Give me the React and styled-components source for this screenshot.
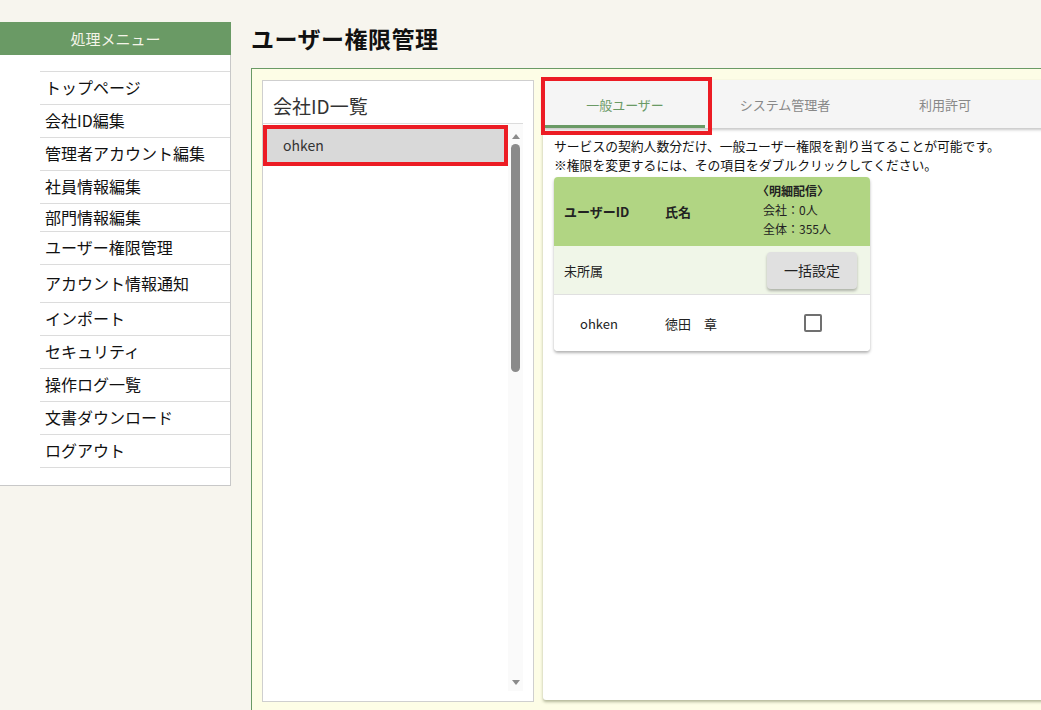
import React from "react";
import styled, { createGlobalStyle } from "styled-components";

const GlobalStyle = createGlobalStyle`
  html, body {
    margin: 0;
    padding: 0;
    overflow: hidden;
    background: #f7f5ee;
  }
  body {
    font-family: "Noto Sans CJK JP", "Noto Sans", sans-serif;
    color: #111;
  }
`;

const Page = styled.div`
  display: flex;
  align-items: flex-start;
  width: 1300px;
  height: 710px;
  overflow: hidden;
`;

const Sidebar = styled.nav`
  width: 230px;
  margin-top: 22px;
  background: #fff;
  border-right: 1px solid #c8c8c8;
  border-bottom: 1px solid #c8c8c8;
  padding-bottom: 17px;
  flex-shrink: 0;
`;

const SidebarHeader = styled.div`
  height: 33px;
  background: #6a9a65;
  color: #f4f4e8;
  font-size: 15px;
  display: flex;
  align-items: center;
  justify-content: center;
  margin-right: -1px;
`;

const MenuList = styled.ul`
  list-style: none;
  margin: 16px 0 0 40px;
  padding: 0;
  border-bottom: 1px solid #dcdcdc;
`;

const MenuItem = styled.li`
  height: ${({ h }) => h}px;
  box-sizing: border-box;
  border-top: 1px solid #dcdcdc;
  display: flex;
  align-items: center;
  padding: 0 0 2px 5px;
  font-size: 16px;
  color: #111;
  white-space: nowrap;
`;

const Main = styled.main`
  flex: 1;
  margin-left: 20px;
  display: flex;
  flex-direction: column;
`;

const Title = styled.h1`
  margin: 0;
  height: 68px;
  padding: 22px 0 14px;
  box-sizing: border-box;
  display: flex;
  align-items: center;
  font-size: 23px;
  font-weight: 700;
  color: #111;
  letter-spacing: 0.5px;
`;

const Panel = styled.section`
  border: 1px solid #6a9a65;
  background: #fdfde6;
  padding: 11px 10px 40px 10px;
  display: flex;
  gap: 9px;
  height: 700px;
  box-sizing: border-box;
`;

const ListBox = styled.div`
  width: 270px;
  height: 620px;
  background: #fff;
  border: 1px solid #cfcfcf;
  display: flex;
  flex-direction: column;
  flex-shrink: 0;
`;

const ListTitle = styled.div`
  height: 43px;
  box-sizing: border-box;
  margin-right: 10px;
  border-bottom: 1px solid #dcdcdc;
  display: flex;
  align-items: flex-end;
  padding: 0 0 4px 10px;
  font-size: 19px;
  color: #333;
`;

const ListBody = styled.div`
  flex: 1;
  display: flex;
  margin-right: 10px;
  margin-bottom: 10px;
`;

const ListItems = styled.div`
  flex: 1;
  padding-top: 3px;
`;

const Company = styled.div`
  position: relative;
  height: 36px;
  background: ${({ selected }) => (selected ? "#d9d9d9" : "transparent")};
  display: flex;
  align-items: center;
  padding-left: 20px;
  font-size: 14px;
  color: #333;

  &::after {
    content: "";
    display: ${({ marked }) => (marked ? "block" : "none")};
    position: absolute;
    left: 0;
    right: 0;
    top: -2px;
    bottom: -3px;
    border: 4px solid #ec1c24;
  }
`;

const ScrollTrack = styled.div`
  width: 15px;
  background: #fafafa;
  display: flex;
  flex-direction: column;
  align-items: center;
  padding: 10px 0 6px;
`;

const Arrow = styled.div`
  width: 0;
  height: 0;
  border-left: 4px solid transparent;
  border-right: 4px solid transparent;
  ${({ down }) =>
    down
      ? "border-top: 5px solid #8a8a8a;"
      : "border-bottom: 5px solid #8a8a8a;"}
`;

const Thumb = styled.div`
  width: 9px;
  height: 228px;
  margin-top: 5px;
  border-radius: 5px;
  background: #8a8a8a;
`;

const Spacer = styled.div`
  flex: 1;
`;

const Card = styled.div`
  flex: 1;
  height: 620px;
  background: #fff;
  border-radius: 3px;
  box-shadow: 0 2px 3px rgba(90, 100, 60, 0.45);
  display: flex;
  flex-direction: column;
`;

const TabBar = styled.div`
  height: 48px;
  background: #f5f5f5;
  display: flex;
  padding-left: 2px;
  box-shadow: 0 2px 3px rgba(0, 0, 0, 0.22);
  border-radius: 3px 3px 0 0;
`;

const Tab = styled.div`
  position: relative;
  width: 160px;
  display: flex;
  align-items: center;
  justify-content: center;
  font-size: 13px;
  color: ${({ active }) => (active ? "#6a9a65" : "#888")};
  box-shadow: ${({ active }) => (active ? "inset 0 -3px 0 #6a9a65" : "none")};

  &::after {
    content: "";
    display: ${({ marked }) => (marked ? "block" : "none")};
    position: absolute;
    left: -4px;
    right: -7px;
    top: -3px;
    bottom: -7px;
    border: 4px solid #ec1c24;
  }
`;

const CardBody = styled.div`
  padding: 8px 11px;
`;

const Note = styled.p`
  margin: 0;
  font-size: 12.8px;
  line-height: 19px;
  color: #111;
  white-space: nowrap;
`;

const Table = styled.div`
  margin-top: 3px;
  width: 316px;
  border-radius: 4px;
  overflow: hidden;
  box-shadow: 0 2px 3px rgba(0, 0, 0, 0.3);
  background: #fff;
`;

const Row = styled.div`
  display: grid;
  grid-template-columns: 101px 100px 115px;
  align-items: center;
  height: ${({ h }) => h}px;
  background: ${({ bg }) => bg || "#fff"};
  border-bottom: ${({ line }) => (line ? "1px solid #e0e0e0" : "none")};
`;

const HeadCell = styled.div`
  font-size: 13px;
  font-weight: 700;
  color: #222;
  padding-left: ${({ pad }) => pad ?? 10}px;
`;

const HeadStack = styled.div`
  display: flex;
  flex-direction: column;
  font-size: 12px;
  line-height: 19px;
  color: #222;
  padding: 0 0 4px 8px;
`;

const Bold = styled.span`
  font-weight: 700;
  margin-left: -6px;
`;

const Cell = styled.div`
  font-size: 13px;
  color: #222;
  padding-left: ${({ pad }) => pad ?? 10}px;
  display: flex;
  justify-content: ${({ center }) => (center ? "center" : "flex-start")};
`;

const Button = styled.button`
  grid-column: 3;
  justify-self: start;
  margin-left: 12px;
  width: 90px;
  height: 37px;
  border: none;
  border-radius: 4px;
  background: #e0e0e0;
  box-shadow: 0 2px 3px rgba(0, 0, 0, 0.28);
  font-family: inherit;
  font-size: 14px;
  color: #222;
`;

const Check = styled.div`
  width: 14px;
  height: 14px;
  border: 2px solid #707070;
  border-radius: 2px;
`;

const menu = [
  ["トップページ", 33],
  ["会社ID編集", 33],
  ["管理者アカウント編集", 33],
  ["社員情報編集", 33],
  ["部門情報編集", 28],
  ["ユーザー権限管理", 33],
  ["アカウント情報通知", 38],
  ["インポート", 33],
  ["セキュリティ", 33],
  ["操作ログ一覧", 33],
  ["文書ダウンロード", 33],
  ["ログアウト", 33],
];

export default function App() {
  return (
    <>
      <GlobalStyle />
      <Page>
        <Sidebar>
          <SidebarHeader>処理メニュー</SidebarHeader>
          <MenuList>
            {menu.map(([label, h]) => (
              <MenuItem key={label} h={h}>
                {label}
              </MenuItem>
            ))}
          </MenuList>
        </Sidebar>
        <Main>
          <Title>ユーザー権限管理</Title>
          <Panel>
            <ListBox>
              <ListTitle>会社ID一覧</ListTitle>
              <ListBody>
                <ListItems>
                  <Company selected marked>
                    ohken
                  </Company>
                </ListItems>
                <ScrollTrack>
                  <Arrow />
                  <Thumb />
                  <Spacer />
                  <Arrow down />
                </ScrollTrack>
              </ListBody>
            </ListBox>
            <Card>
              <TabBar>
                <Tab active marked>
                  一般ユーザー
                </Tab>
                <Tab>システム管理者</Tab>
                <Tab>利用許可</Tab>
              </TabBar>
              <CardBody>
                <Note>
                  サービスの契約人数分だけ、一般ユーザー権限を割り当てることが可能です。
                </Note>
                <Note>
                  ※権限を変更するには、その項目をダブルクリックしてください。
                </Note>
                <Table>
                  <Row h={69} bg="#b1d583">
                    <HeadCell>ユーザーID</HeadCell>
                    <HeadCell>氏名</HeadCell>
                    <HeadStack>
                      <Bold>〈明細配信〉</Bold>
                      <span>会社：0人</span>
                      <span>全体：355人</span>
                    </HeadStack>
                  </Row>
                  <Row h={48} bg="#f0f6e8" line>
                    <Cell>未所属</Cell>
                    <Button>一括設定</Button>
                  </Row>
                  <Row h={56}>
                    <Cell pad={26}>ohken</Cell>
                    <Cell>徳田　章</Cell>
                    <Cell pad={0} center>
                      <Check />
                    </Cell>
                  </Row>
                </Table>
              </CardBody>
            </Card>
          </Panel>
        </Main>
      </Page>
    </>
  );
}
